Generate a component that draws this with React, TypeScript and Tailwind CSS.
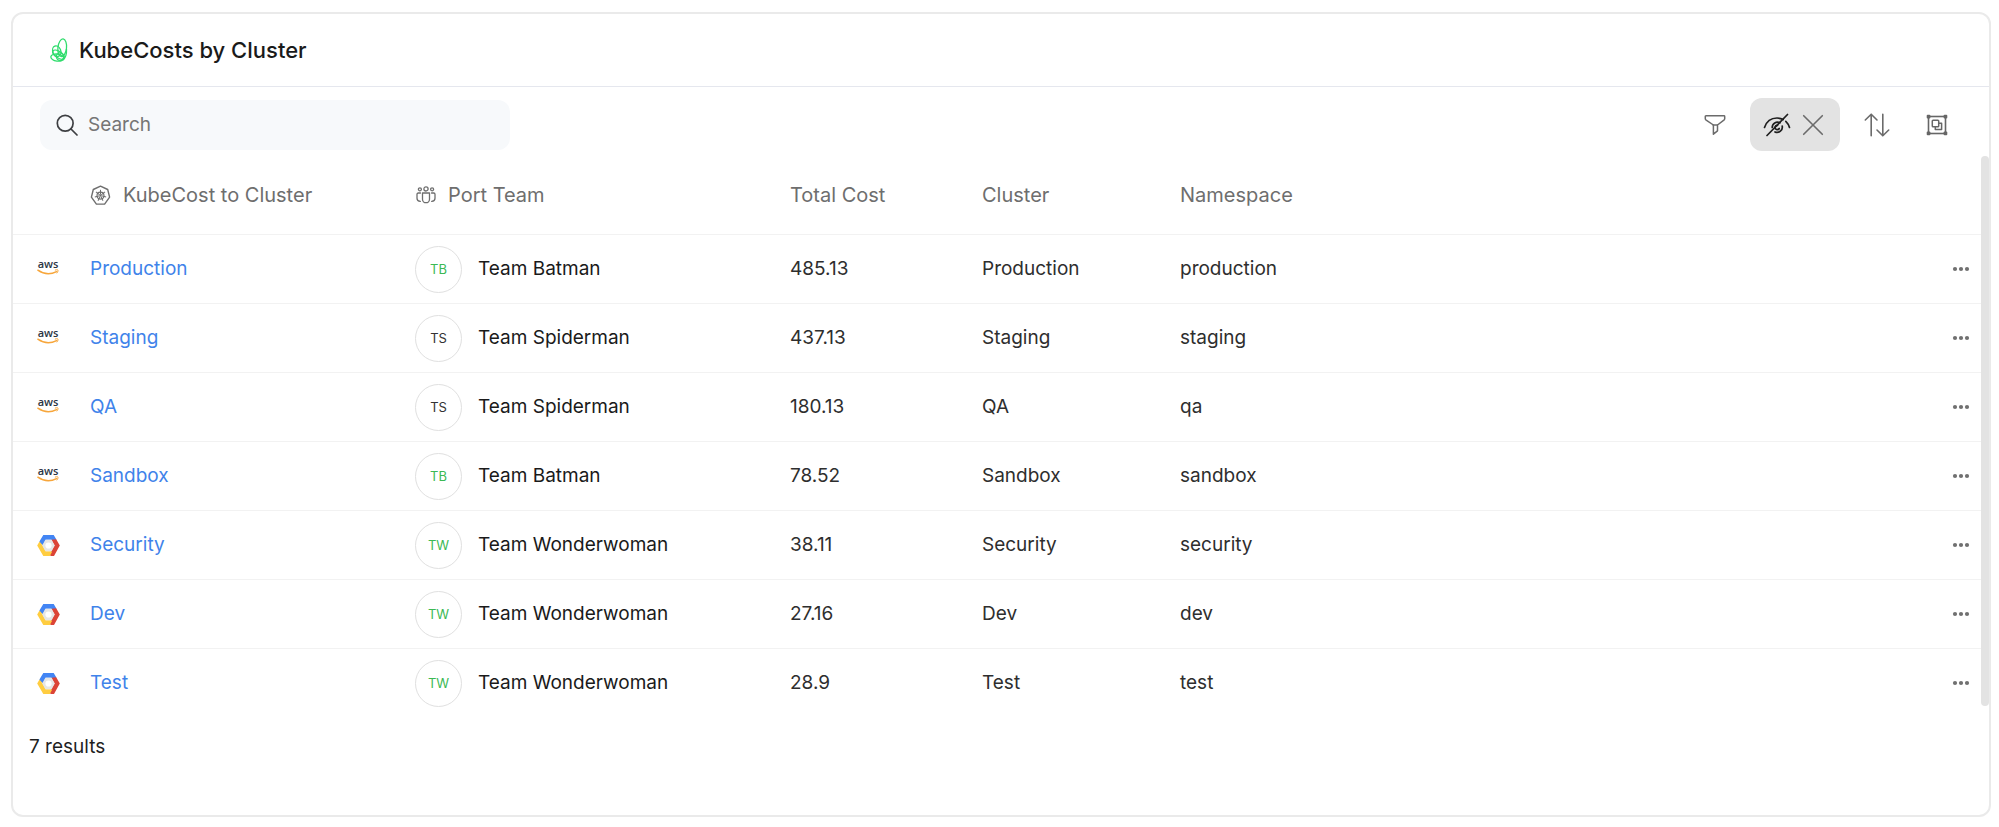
import React from "react";

type Provider = "aws" | "gcp";

interface CostRow {
  provider: Provider;
  name: string;
  team: string;
  initials: string;
  cost: string;
  namespace: string;
}

const rows: CostRow[] = [
  { provider: "aws", name: "Production", team: "Team Batman", initials: "TB", cost: "485.13", namespace: "production" },
  { provider: "aws", name: "Staging", team: "Team Spiderman", initials: "TS", cost: "437.13", namespace: "staging" },
  { provider: "aws", name: "QA", team: "Team Spiderman", initials: "TS", cost: "180.13", namespace: "qa" },
  { provider: "aws", name: "Sandbox", team: "Team Batman", initials: "TB", cost: "78.52", namespace: "sandbox" },
  { provider: "gcp", name: "Security", team: "Team Wonderwoman", initials: "TW", cost: "38.11", namespace: "security" },
  { provider: "gcp", name: "Dev", team: "Team Wonderwoman", initials: "TW", cost: "27.16", namespace: "dev" },
  { provider: "gcp", name: "Test", team: "Team Wonderwoman", initials: "TW", cost: "28.9", namespace: "test" },
];

function KubecostLogo() {
  return (
    <svg width="18" height="24" viewBox="0 0 18 24" fill="none" stroke="#2fdc6c" strokeWidth="1.3" aria-hidden="true">
      <ellipse cx="12.2" cy="9.8" rx="4.3" ry="8.900" transform="rotate(6 12.2 9.8)" />
      <ellipse cx="6.8" cy="13.2" rx="4" ry="5.4" transform="rotate(-22 6.8 13.2)" />
      <ellipse cx="8.5" cy="16.6" rx="6.6" ry="3.2" transform="rotate(32 8.5 16.6)" />
      <ellipse cx="7.4" cy="19.6" rx="6.6" ry="3.5" transform="rotate(8 7.4 19.6)" />
      <ellipse cx="10" cy="18.6" rx="3.6" ry="3.8" />
      <path d="M16.500 11c.3 5-.6 9-3.900 11.200" />
    </svg>
  );
}

function SearchIcon() {
  return (
    <svg width="22" height="22" viewBox="0 0 22 22" fill="none" stroke="#3d3f42" strokeWidth="1.7" strokeLinecap="round" aria-hidden="true">
      <circle cx="9.200" cy="9.200" r="7.900" />
      <path d="M15 15l6 6" />
    </svg>
  );
}

function FilterIcon() {
  return (
    <svg width="22" height="22" viewBox="0 0 22 22" fill="none" stroke="#6b6b6b" strokeWidth="1.5" strokeLinejoin="round" aria-hidden="true">
      <path d="M2 1.700h18c.5 0 .7.3.7.7v2.300c0 .5-.2.8-.5 1.100L13.500 11v5.800l-4.100 3.400V11L1.800 5.800c-.3-.3-.5-.6-.5-1.100V2.400c0-.4.2-.7.7-.7z" />
      <path d="M8.500 11h5.500" />
    </svg>
  );
}

function HiddenIcon() {
  return (
    <svg width="28" height="24" viewBox="0 0 28 24" fill="none" stroke="#1f1f1f" strokeWidth="1.7" strokeLinecap="round" aria-hidden="true">
      <path d="M1.500 14.500C3.500 8.500 8.300 5 14 5c2.300 0 4.300.5 6.200 1.500" />
      <path d="M22.800 8.300c1.700 1.600 3 3.700 3.700 6.200" />
      <path d="M9.200 14.500a5.300 5.300 0 0 1 7.800-4.700" />
      <path d="M19.200 13a5.300 5.300 0 0 1-7.200 6" />
      <path d="M14.500 12.300a2.200 2.200 0 1 0 1.700 3.200" />
      <path d="M24.500 1.500L4 22.500" />
    </svg>
  );
}

function CloseIcon() {
  return (
    <svg width="22" height="22" viewBox="0 0 22 22" fill="none" stroke="#6b6b6b" strokeWidth="1.600" strokeLinecap="round" aria-hidden="true">
      <path d="M1.700 1.700l18.600 18.600M20.300 1.700L1.700 20.300" />
    </svg>
  );
}

function SortIcon() {
  return (
    <svg width="26" height="24" viewBox="0 0 26 24" fill="none" stroke="#6b6b6b" strokeWidth="1.600" strokeLinecap="round" strokeLinejoin="round" aria-hidden="true">
      <path d="M7.200 22.800V1.200M1.300 7l5.900-5.800L13 7" />
      <path d="M18.800 1.200v21.600M13 17l5.800 5.800L24.700 17" />
    </svg>
  );
}

function GroupIcon() {
  return (
    <svg width="22" height="22" viewBox="0 0 22 22" fill="none" stroke="#666" aria-hidden="true">
      <rect x="2.500" y="2.500" width="17" height="17" strokeWidth="1.600" />
      <rect x="6.300" y="6.300" width="6.400" height="6.400" rx=".8" strokeWidth="1.500" />
      <path d="M13 9.300h2.600v6.300H9.300V13" strokeWidth="1.500" strokeLinejoin="round" />
      <g fill="#666" stroke="none">
        <rect x=".7" y=".7" width="3.700" height="3.700" rx="1" />
        <rect x="17.600" y=".7" width="3.700" height="3.700" rx="1" />
        <rect x=".7" y="17.600" width="3.700" height="3.700" rx="1" />
        <rect x="17.600" y="17.600" width="3.700" height="3.700" rx="1" />
      </g>
    </svg>
  );
}

const SPOKES = [0, 1, 2, 3, 4, 5, 6];

function ClusterIcon() {
  return (
    <svg width="21" height="21" viewBox="0 0 21 21" fill="none" stroke="#6e6e6e" strokeLinejoin="round" aria-hidden="true">
      <path d="M10.500 1.100l7.200 3.400 1.900 7.700-5 6.900H6.400l-5-6.900 1.900-7.700z" strokeWidth="1.400" />
      <circle cx="10.500" cy="10.600" r="3.500" strokeWidth="1.100" />
      {SPOKES.map((i) => (
        <path key={i} d="M10.500 9.600V4.800" strokeWidth="1" transform={`rotate(${(i * 360) / 7} 10.500 10.600)`} />
      ))}
      <circle cx="10.500" cy="10.600" r="1" fill="#6e6e6e" stroke="none" />
    </svg>
  );
}

function TeamIcon() {
  return (
    <svg width="21" height="18" viewBox="-1 0 21 18" fill="none" stroke="#6e6e6e" strokeWidth="1.300" strokeLinecap="round" strokeLinejoin="round" aria-hidden="true">
      <circle cx="10" cy="2.900" r="2.100" />
      <circle cx="3.900" cy="3.300" r="1.500" />
      <circle cx="16.100" cy="3.300" r="1.500" />
      <path d="M6.500 7h7v6.200a3.500 3.500 0 0 1-7 0z" />
      <path d="M4.500 7H2.300C1.500 7 1 7.500 1 8.300v3.900c0 1.800 1.200 3 3.300 3.200" />
      <path d="M15.500 7h2.200c.8 0 1.300.5 1.300 1.300v3.900c0 1.800-1.200 3-3.300 3.200" />
    </svg>
  );
}

function AwsLogo() {
  return (
    <span className="flex w-[22px] flex-col items-center pb-1 font-['Open_Sans',sans-serif] text-[11px] font-semibold leading-[10px] text-[#2b3544]">
      aws
      <svg width="22" height="6" viewBox="0 0 22 6" fill="none" stroke="#f7a63b" strokeLinecap="round" aria-hidden="true">
        <path d="M.9 1.200c5.800 4.200 13 4.400 18.700 1.500" strokeWidth="1.500" />
        <path d="M18.300 1c1.500-.4 2.500-.3 2.700.1.200.5-.1 1.900-1 2.900" strokeWidth="1" />
      </svg>
    </span>
  );
}

function GcpLogo() {
  return (
    <svg width="23" height="21" viewBox="0 0 23 21" aria-hidden="true">
      <path d="M6.300 0h10.400l2.700 4.600-3.200 2.600-1.900-2.400H8.700L6 10.300 3.100 8 2.400 6.500z" fill="#4285f4" />
      <path d="M19.200 4.300L22.800 10.500 17 21h-3.500l-.8-2.400 4.800-8.100-3.200-5.700z" fill="#db4437" />
      <path d="M2.500 6.500l3.200 4 3 5.700h5.600L15 17l-2.200 4H6.300L.2 10.500z" fill="#ffcd40" />
      <path d="M8.400 4.800h6.200l3.200 5.700-3.200 5.700H8.400l-3.200-5.700z" fill="#e6e6e6" />
      <circle cx="11.500" cy="10.500" r="3.100" fill="#fff" />
    </svg>
  );
}

function MoreIcon() {
  return (
    <svg width="18" height="6" viewBox="0 0 18 6" fill="#707070" aria-hidden="true">
      <circle cx="3" cy="3" r="2.100" />
      <circle cx="9" cy="3" r="2.100" />
      <circle cx="15" cy="3" r="2.100" />
    </svg>
  );
}

const headCell = "pl-[23px] text-left text-[20px] font-normal";
const cell = "border-b border-[#f2f2f2] pl-[23px] group-last:border-transparent";

export default function App() {
  return (
    <main className="flex min-h-screen bg-white pt-3 pr-2 pb-[10px] pl-[11px] font-['Inter',sans-serif] text-[19px] leading-6 text-[#2e2e2e]">
      <section className="flex min-w-0 flex-1 flex-col rounded-xl border-2 border-[#eaeaea]">
        <header className="flex h-[73px] items-center gap-[11px] border-b border-[#e5e7ee] pl-[37px]">
          <KubecostLogo />
          <h1 className="text-[22px] font-medium leading-7 text-[#1a1a1a]">KubeCosts by Cluster</h1>
        </header>

        <div className="flex h-[69px] items-end justify-between pr-[41px] pb-[5px] pl-[27px]">
          <label className="mb-px flex h-[50px] w-[470px] items-center gap-[10px] rounded-xl bg-[#f7f9fb] px-4">
            <SearchIcon />
            <input
              type="search"
              aria-label="Search"
              placeholder="Search"
              className="min-w-0 flex-1 bg-transparent leading-6 text-[#2e2e2e] outline-none placeholder:text-[#757575]"
            />
          </label>
          <div className="flex items-center gap-6">
            <button type="button" aria-label="Filter" className="flex">
              <FilterIcon />
            </button>
            <div className="flex h-[53px] items-center gap-[11px] rounded-xl bg-[#e3e3e3] pr-4 pl-[13px]">
              <button type="button" aria-label="Hidden properties" className="flex">
                <HiddenIcon />
              </button>
              <button type="button" aria-label="Clear hidden properties" className="flex">
                <CloseIcon />
              </button>
            </div>
            <button type="button" aria-label="Sort" className="mr-3 flex">
              <SortIcon />
            </button>
            <button type="button" aria-label="Group by" className="flex">
              <GroupIcon />
            </button>
          </div>
        </div>

        <div className="relative">
          <div className="pr-2">
            <table className="w-full table-fixed border-separate border-spacing-0">
              <colgroup>
                <col className="w-[54px]" />
                <col className="w-[325px]" />
                <col className="w-[375px]" />
                <col className="w-[192px]" />
                <col className="w-[198px]" />
                <col />
                <col className="w-[56px]" />
              </colgroup>
              <thead className="text-[#6e6e6e]">
                <tr className="h-[79px] [&>th]:border-b [&>th]:border-[#f2f2f2]">
                  <th aria-label="Provider" />
                  <th scope="col" className={headCell}>
                    <span className="flex items-center gap-3">
                      <ClusterIcon />
                      KubeCost to Cluster
                    </span>
                  </th>
                  <th scope="col" className={headCell}>
                    <span className="flex items-center gap-3">
                      <TeamIcon />
                      Port Team
                    </span>
                  </th>
                  <th scope="col" className={headCell}>Total Cost</th>
                  <th scope="col" className={headCell}>Cluster</th>
                  <th scope="col" className={headCell}>Namespace</th>
                  <th aria-label="Actions" />
                </tr>
              </thead>
              <tbody>
                {rows.map((row) => (
                  <tr key={row.name} className="group h-[69px]">
                    <td className="border-b border-[#f2f2f2] pl-6 group-last:border-transparent">
                      {row.provider === "aws" ? <AwsLogo /> : <GcpLogo />}
                    </td>
                    <td className={cell}>
                      <a href="#" className="text-[#3f83ea]">{row.name}</a>
                    </td>
                    <td className={cell}>
                      <span className="flex items-center gap-4 text-[#1a1a1a]">
                        <span
                          className={
                            row.initials === "TS"
                              ? "flex size-[47px] items-center justify-center rounded-full border border-[#e0e0e0] text-[13px] text-[#333333]"
                              : "flex size-[47px] items-center justify-center rounded-full border border-[#e0e0e0] text-[13px] text-[#3cb954]"
                          }
                        >
                          {row.initials}
                        </span>
                        {row.team}
                      </span>
                    </td>
                    <td className={cell}>{row.cost}</td>
                    <td className={cell}>{row.name}</td>
                    <td className={cell}>{row.namespace}</td>
                    <td className="border-b border-[#f2f2f2] pl-[27px] group-last:border-transparent">
                      <button type="button" aria-label={`Actions for ${row.name}`} className="flex">
                        <MoreIcon />
                      </button>
                    </td>
                  </tr>
                ))}
              </tbody>
            </table>
          </div>
          <div className="absolute top-0 right-0 bottom-3 w-2 rounded-full bg-[#e3e3e3]" />
        </div>

        <p className="mt-[17px] pl-4 text-[#1f1f1f]">7 results</p>
      </section>
    </main>
  );
}
